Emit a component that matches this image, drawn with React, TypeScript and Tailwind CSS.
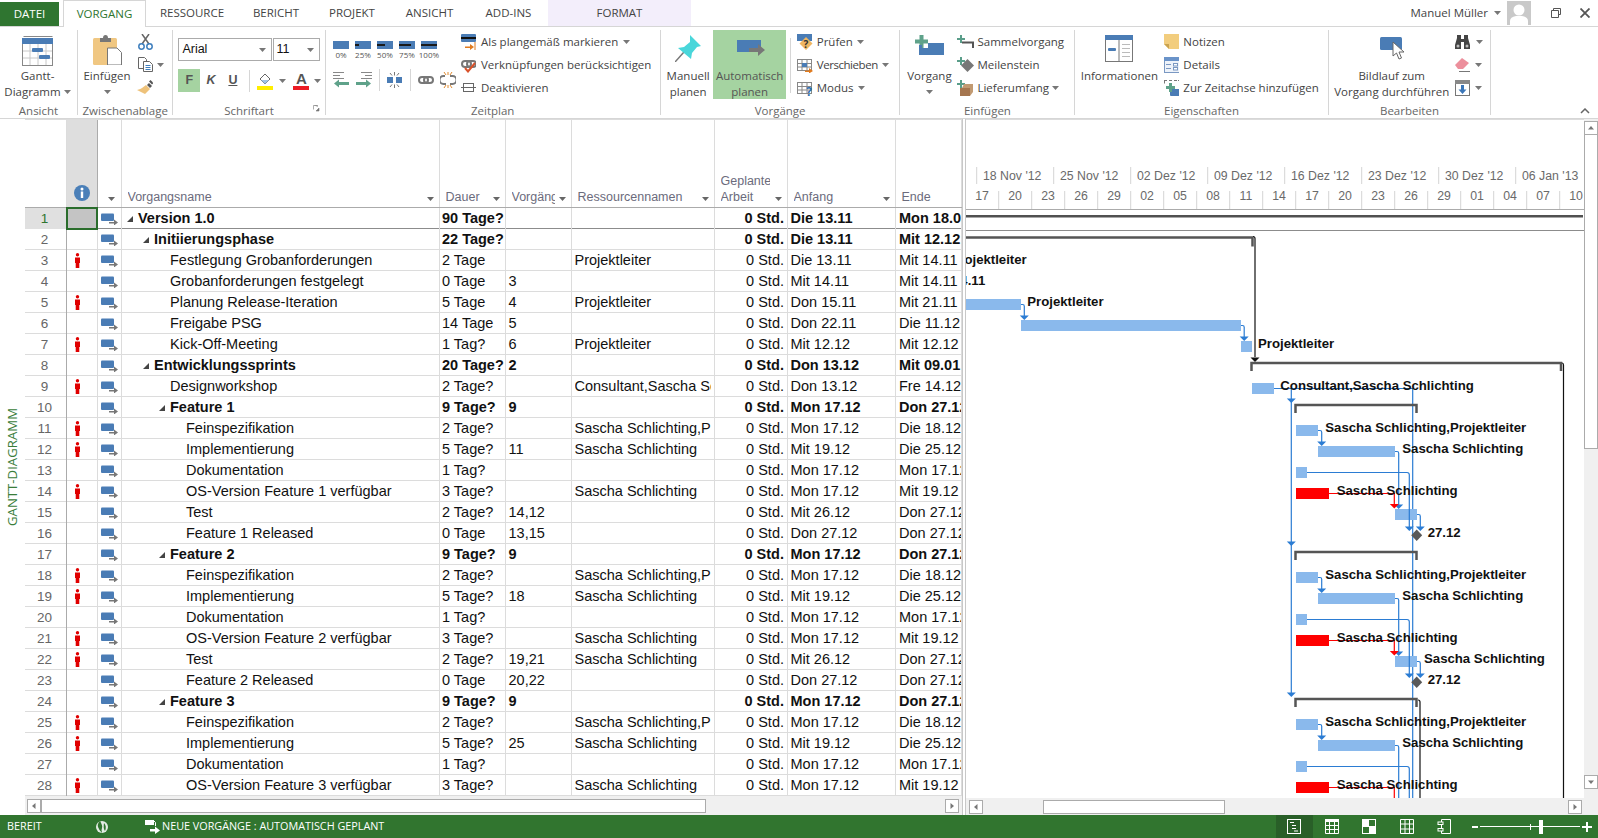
import type { ReactNode } from "react";

const BLUE = "#4a7cb5";

type Row = { n: number; lvl: number; name: string; dur: string; pred: string; res: string; start: string; end: string; bold?: boolean };

const SS = "Sascha Schlichting";
const featureRows = (no: number, first: number, testPred: string, testRes: string): Row[] => [
  { n: first, lvl: 2, name: `Feature ${no}`, dur: "9 Tage?", pred: "9", res: "", start: "Mon 17.12", end: "Don 27.12", bold: true },
  { n: first + 1, lvl: 3, name: "Feinspezifikation", dur: "2 Tage?", pred: "", res: `${SS},Projektleiter`, start: "Mon 17.12", end: "Die 18.12" },
  { n: first + 2, lvl: 3, name: "Implementierung", dur: "5 Tage?", pred: `${first + 1}`, res: SS, start: "Mit 19.12", end: "Die 25.12" },
  { n: first + 3, lvl: 3, name: "Dokumentation", dur: "1 Tag?", pred: "", res: "", start: "Mon 17.12", end: "Mon 17.12" },
  { n: first + 4, lvl: 3, name: `OS-Version Feature ${no} verfügbar`, dur: "3 Tage?", pred: "", res: SS, start: "Mon 17.12", end: "Mit 19.12" },
  { n: first + 5, lvl: 3, name: "Test", dur: "2 Tage?", pred: testPred, res: testRes, start: "Mit 26.12", end: "Don 27.12" },
  { n: first + 6, lvl: 3, name: `Feature ${no} Released`, dur: "0 Tage", pred: `${first + 3},${first + 5}`, res: "", start: "Don 27.12", end: "Don 27.12" },
];

const rows: Row[] = [
  { n: 1, lvl: 0, name: "Version 1.0", dur: "90 Tage?", pred: "", res: "", start: "Die 13.11", end: "Mon 18.03", bold: true },
  { n: 2, lvl: 1, name: "Initiierungsphase", dur: "22 Tage?", pred: "", res: "", start: "Die 13.11", end: "Mit 12.12", bold: true },
  { n: 3, lvl: 2, name: "Festlegung Grobanforderungen", dur: "2 Tage", pred: "", res: "Projektleiter", start: "Die 13.11", end: "Mit 14.11" },
  { n: 4, lvl: 2, name: "Grobanforderungen festgelegt", dur: "0 Tage", pred: "3", res: "", start: "Mit 14.11", end: "Mit 14.11" },
  { n: 5, lvl: 2, name: "Planung Release-Iteration", dur: "5 Tage", pred: "4", res: "Projektleiter", start: "Don 15.11", end: "Mit 21.11" },
  { n: 6, lvl: 2, name: "Freigabe PSG", dur: "14 Tage", pred: "5", res: "", start: "Don 22.11", end: "Die 11.12" },
  { n: 7, lvl: 2, name: "Kick-Off-Meeting", dur: "1 Tag?", pred: "6", res: "Projektleiter", start: "Mit 12.12", end: "Mit 12.12" },
  { n: 8, lvl: 1, name: "Entwicklungssprints", dur: "20 Tage?", pred: "2", res: "", start: "Don 13.12", end: "Mit 09.01", bold: true },
  { n: 9, lvl: 2, name: "Designworkshop", dur: "2 Tage?", pred: "", res: `Consultant,${SS}`, start: "Don 13.12", end: "Fre 14.12" },
  ...featureRows(1, 10, "14,12", ""),
  ...featureRows(2, 17, "19,21", SS),
  ...featureRows(3, 24, "", "").slice(0, 5),
];

const Caret = ({ c = "#777" }: { c?: string }) => (
  <svg width="7" height="4" className="shrink-0">
    <path d="M0 0h7L3.5 4z" fill={c} />
  </svg>
);

const Group = ({ w, label, children }: { w: string; label: string; children: ReactNode }) => (
  <div className={`${w} relative flex h-[85px] shrink-0 flex-col border-r border-[#d6d6d6]`}>
    <div className="flex h-[72px] shrink-0">{children}</div>
    <div className="text-center text-[11.5px] leading-[18px] text-[#666]">{label}</div>
  </div>
);

const SmallRow = ({ icon, text, caret, gap = "gap-[4px]", iw = "w-[16px]", tc = "" }: { icon: ReactNode; text?: string; caret?: boolean; gap?: string; iw?: string; tc?: string }) => (
  <div className={`flex h-[23px] items-center whitespace-nowrap ${gap}`}>
    <div className={`${iw} flex shrink-0 justify-center`}>{icon}</div>
    {text && <span className={tc}>{text}</span>}
    {caret && <Caret />}
  </div>
);

const Large = ({ w, icon, l1, l2, caret, active }: { w: string; icon: ReactNode; l1: string; l2?: string; caret?: boolean; active?: boolean }) => (
  <div className={`${w} flex h-[69px] shrink-0 flex-col items-center ${active ? "bg-[#a5d3a1] text-[#555]" : ""}`}>
    <div className="flex h-[38px] items-start justify-center pt-[5px]">{icon}</div>
    <div className="mt-[1px] whitespace-nowrap leading-[16px]">{l1}</div>
    <div className="flex h-[15px] items-center gap-[3px] whitespace-nowrap leading-[15px]">
      {l2}
      {caret && <Caret />}
    </div>
  </div>
);

const Tab = ({ w, children }: { w: string; children: string }) => (
  <div className={`${w} flex shrink-0 items-center justify-center text-[#444]`}>{children}</div>
);

const PctBar = ({ fill, label }: { fill: number; label: string }) => (
  <div className="flex w-[16px] flex-col items-center">
    <svg width="16" height="8">
      <rect width="16" height="8" fill={BLUE} />
      {fill > 0 && <rect y="3" width={fill * 16} height="2" fill="#1a1a1a" />}
    </svg>
    <span className="mt-[1px] text-[8px] leading-[10px] text-[#555]">{label}</span>
  </div>
);

const Chain = ({ c = "#777" }: { c?: string }) => (
  <g fill="none" stroke={c} strokeWidth="2">
    <rect x="1" y="4" width="9" height="6" rx="3" />
    <rect x="6" y="4" width="9" height="6" rx="3" />
  </g>
);

const Grid = () => (
  <g fill="#fff" stroke="#888" strokeWidth="1">
    <rect x="0.5" y="2.5" width="14" height="11" />
    <path d="M0.5 6.5h14M0.5 10h14M5 2.5v11M10 2.5v11" fill="none" />
  </g>
);

const SmallPlus = () => <path d="M3 0h2v3h3v2H5v3H3V5H0V3h3z" fill="#5a9e8a" />;

const Person = () => (
  <svg width="7" height="15">
    <circle cx="3.5" cy="1.8" r="1.7" fill="#e00000" />
    <path d="M1 4.5h5v5.5H5.3V15H1.7V10H1z" fill="#e00000" />
  </svg>
);

const ModeIcon = () => (
  <svg width="17" height="12">
    <rect y="0.5" width="13" height="7.5" rx="1" fill={BLUE} />
    <path d="M8 9h5V6.5L17 9.5 13 12.5V10.5H8z" fill="#777" />
  </svg>
);

const ScrollBtn = ({ dir }: { dir: "l" | "r" | "u" | "d" }) => (
  <div className="flex h-[14px] w-[14px] shrink-0 items-center justify-center border border-[#ababab] bg-white">
    <svg width="8" height="8">
      {dir === "l" && <path d="M5.5 1v6L2 4z" fill="#777" />}
      {dir === "r" && <path d="M2.5 1v6L6 4z" fill="#777" />}
      {dir === "u" && <path d="M1 5.5h6L4 2z" fill="#777" />}
      {dir === "d" && <path d="M1 2.5h6L4 6z" fill="#777" />}
    </svg>
  </div>
);

const HeadCell = ({ w, lines }: { w: string; lines: string[] }) => (
  <div className="flex items-end justify-between border-r border-[#dcdcdc] pl-[6px] pr-[5px]">
    <div className={`${w} overflow-hidden whitespace-nowrap pb-[2px] leading-[16px]`}>
      {lines.map((l) => (
        <div key={l}>{l}</div>
      ))}
    </div>
    <div className="pb-[6px]">
      <Caret c="#666" />
    </div>
  </div>
);

const COLS = "grid grid-cols-[41px_32px_23.5px_318px_66px_66px_143px_73px_108px_66.5px]";

const TableRow = ({ r }: { r: Row }) => {
  const cell = "overflow-hidden whitespace-nowrap border-r border-[#dcdcdc] leading-[21px]";
  return (
    <div className={`${COLS} h-[21px] border-b ${r.n === 1 ? "border-[#8c8c8c]" : "border-[#dcdcdc]"} ${r.bold ? "font-bold" : ""}`}>
      <div className={`pr-[2px] text-center text-[13.5px] font-normal leading-[21px] ${r.n === 1 ? "bg-[#e0e0e0] text-[#2f7530]" : "text-[#666]"}`}>{r.n}</div>
      <div className={`flex items-center border-x border-l-[#ababab] border-r-[#dcdcdc] ${r.n === 1 ? "justify-center" : "pl-[7px]"}`}>
        {r.n === 1 ? <div className="relative -m-px h-[23px] w-[33px] border-2 border-[#2a6d2c] bg-[#c4c4c4]" /> : r.res && <Person />}
      </div>
      <div className="flex items-center justify-center border-r border-[#dcdcdc]">
        <ModeIcon />
      </div>
      <div className={`${cell} flex items-center`}>
        <div className={r.lvl === 0 ? "w-[16.5px]" : r.lvl === 1 ? "w-[32.5px]" : r.lvl === 2 ? "w-[48.5px]" : "w-[64.5px]"} />
        {r.bold && (
          <svg width="6" height="6" className="-ml-[11px] mr-[5px]">
            <path d="M6 0v6H0z" fill="#444" />
          </svg>
        )}
        {r.name}
      </div>
      <div className={`${cell} pl-[2.5px]`}>
        <div className="w-[61.5px] overflow-hidden">{r.dur}</div>
      </div>
      <div className={`${cell} pl-[3px]`}>{r.pred}</div>
      <div className={`${cell} pl-[3px]`}>
        <div className="w-[136px] overflow-hidden">{r.res}</div>
      </div>
      <div className={`${cell} pr-[2.5px] text-right`}>0 Std.</div>
      <div className={`${cell} pl-[3px]`}>{r.start}</div>
      <div className={`${cell} pl-[3.5px]`}>{r.end}</div>
    </div>
  );
};

const Arrow = ({ x, y, c = "#2b7cd3" }: { x: number; y: number; c?: string }) => (
  <polygon points={`${x - 4.5},${y - 4.5} ${x + 4.5},${y - 4.5} ${x},${y}`} fill={c} />
);

const Bar = ({ x, y, w, c = "#8ab9ec" }: { x: number; y: number; w: number; c?: string }) => <rect x={x} y={y} width={w} height={11} fill={c} />;

const Lbl = ({ x, y, t }: { x: number; y: number; t: string }) => (
  <text x={x} y={y + 3.5} fontSize="13.2" fontWeight="700" fill="#111">
    {t}
  </text>
);

const Summary = ({ x1, x2, y }: { x1: number; x2: number; y: number }) => (
  <path d={`M${x1} ${y + 9}V${y + 1}H${x2}V${y + 9}`} fill="none" stroke="#555" strokeWidth="2.5" />
);

const blueLine = { fill: "none", stroke: "#2b7cd3", strokeWidth: 1.2 };

const Feature = ({ o, test }: { o: number; test?: boolean }) => (
  <g>
    <Summary x1={1295.5} x2={1416.5} y={403 + o} />
    <Bar x={1296} y={424 + o} w={22} />
    <Bar x={1318} y={445 + o} w={77} />
    <Bar x={1296} y={466 + o} w={11} />
    <Bar x={1296} y={487 + o} w={33} c="#ff0000" />
    <Bar x={1395} y={508 + o} w={22} />
    <path {...blueLine} d="M1318 429.5h2q1.7 0 1.7 1.7V441" transform={`translate(0 ${o})`} />
    <Arrow x={1321.7} y={445 + o} />
    <path {...blueLine} d="M1395 450.5h2q1.7 0 1.7 1.7V504" transform={`translate(0 ${o})`} />
    <Arrow x={1398.7} y={508 + o} />
    <path {...blueLine} d="M1307 471.5h100q2.3 0 2.3 2.3V526" transform={`translate(0 ${o})`} />
    <Arrow x={1409.3} y={530 + o} />
    <path d="M1329 492.5h65.3V503" transform={`translate(0 ${o})`} fill="none" stroke="#ff0000" strokeWidth="1.2" />
    <Arrow x={1394.3} y={507.5 + o} c="#ff0000" />
    <path {...blueLine} d="M1417 513.5h1.6q1.7 0 1.7 1.7V526" transform={`translate(0 ${o})`} />
    <Arrow x={1420.3} y={530 + o} />
    <polygon points={`1416.7,${528.5 + o} 1422.2,${534.3 + o} 1416.7,${540 + o} 1411.2,${534.3 + o}`} fill="#595959" />
    <Lbl x={1325.3} y={427.3 + o} t={`${SS},Projektleiter`} />
    <Lbl x={1402.3} y={448.3 + o} t={SS} />
    <Lbl x={1336.7} y={490 + o} t={SS} />
    {test && <Lbl x={1424} y={511 + o} t={SS} />}
    <Lbl x={1427.7} y={532.5 + o} t="27.12" />
  </g>
);

const WEEKS = ["18 Nov '12", "25 Nov '12", "02 Dez '12", "09 Dez '12", "16 Dez '12", "23 Dez '12", "30 Dez '12", "06 Jan '13"];
const DAYS = ["17", "20", "23", "26", "29", "02", "05", "08", "11", "14", "17", "20", "23", "26", "29", "01", "04", "07", "10"];

const GanttChart = () => (
  <svg width="618" height="678" viewBox="966 119 618 678" className="block shrink-0">
    {WEEKS.map((w, i) => (
      <g key={w}>
        <line x1={976.7 + 77 * i} x2={976.7 + 77 * i} y1="166" y2="183" stroke="#d4d4d4" />
        <text x={983 + 77 * i} y="178.5" fontSize="12.3" fill="#6a6a6a">
          {w}
        </text>
      </g>
    ))}
    {DAYS.map((d, i) => (
      <g key={i}>
        {i > 0 && <line x1={965.7 + 33 * i} x2={965.7 + 33 * i} y1="190" y2="208" stroke="#d4d4d4" />}
        <text x={982 + 33 * i} y="199" fontSize="12.3" textAnchor="middle" fill="#6a6a6a">
          {d}
        </text>
      </g>
    ))}
    <line x1="966" x2="1584" y1="208.5" y2="208.5" stroke="#ababab" />
    <line x1="966" x2="1584" y1="229.5" y2="229.5" stroke="#8c8c8c" />
    <rect x="966" y="214" width="617" height="2.5" fill="#505050" />

    <path d="M966 236.5H1252.5V245.5" fill="none" stroke="#555" strokeWidth="2.5" />
    <path d="M1253 235.5q2 0 2 2V356" fill="none" stroke="#111" strokeWidth="1.2" />
    <Arrow x={1255} y={361} c="#111" />
    <Summary x1={1251.5} x2={1561} y={361} />
    <path d="M1562 362q1.5 0 1.5 2V797" fill="none" stroke="#111" strokeWidth="1.2" />

    <Bar x={966} y={298} w={55} />
    <Bar x={1021} y={319} w={220} />
    <Bar x={1241} y={340} w={11} />
    <path {...blueLine} d="M1021 303.5h1.6q1.7 0 1.7 1.7V315" />
    <Arrow x={1024.3} y={319} />
    <path {...blueLine} d="M1241 324.5h1.5q1.7 0 1.7 1.7V336" />
    <Arrow x={1244.2} y={340} />

    <Bar x={1252} y={382} w={22} />
    <path {...blueLine} d="M1274 387.5H1412.7V797" />
    <path {...blueLine} d="M1291.3 387.5V692" />
    <Arrow x={1291.3} y={402} />
    <Arrow x={1291.3} y={545} />
    <Arrow x={1291.3} y={696} />

    <Feature o={0} />
    <Feature o={147} test />
    <Feature o={294} />
    <path d="M1418 699q2 0 2 2V797" fill="none" stroke="#111" strokeWidth="1.2" />

    <Lbl x={950.5} y={259.7} t="Projektleiter" />
    <Lbl x={953} y={280} t="14.11" />
    <Lbl x={1027.3} y={301.3} t="Projektleiter" />
    <Lbl x={1258} y={343.7} t="Projektleiter" />
    <Lbl x={1280.3} y={385.3} t={`Consultant,${SS}`} />
  </svg>
);

export default function App() {
  return (
    <div className="flex h-[838px] w-[1598px] flex-col overflow-hidden bg-white font-['Liberation_Sans',Arial,sans-serif] text-[14.5px] text-[#111]">
      {/* tabs */}
      <div className="flex h-[27px] shrink-0 border-b border-[#d6d6d6] font-['Open_Sans',sans-serif] text-[11.5px]">
        <div className="mt-[2px] flex h-[24px] w-[59px] shrink-0 items-center justify-center bg-[#2f7530] text-white">DATEI</div>
        <div className="ml-[4px] flex h-[27px] w-[83px] shrink-0 items-center justify-center border border-b-0 border-[#d6d6d6] bg-white font-medium text-[#2f7530]">VORGANG</div>
        <Tab w="w-[92px]">RESSOURCE</Tab>
        <Tab w="w-[76px]">BERICHT</Tab>
        <Tab w="w-[76px]">PROJEKT</Tab>
        <Tab w="w-[79px]">ANSICHT</Tab>
        <Tab w="w-[79px]">ADD-INS</Tab>
        <div className="flex h-[26px] w-[143px] shrink-0 items-center justify-center bg-[#f3eefb] text-[#444]">FORMAT</div>
        <div className="ml-auto flex items-center pr-[8px] text-[#444]">
          Manuel Müller
          <span className="mx-[6px]">
            <Caret />
          </span>
          <svg width="24" height="24" className="mr-[20px]">
            <rect width="24" height="24" fill="#c9c9c9" />
            <circle cx="12" cy="9" r="5.5" fill="#fff" />
            <path d="M3 24v-4q0-4 6-5h6q6 1 6 5v4z" fill="#fff" />
          </svg>
          <svg width="10" height="10" className="mr-[19px]">
            <path d="M2.5 2.5V.5h7v6h-2M.5 2.5h7v7h-7z" fill="none" stroke="#555" />
          </svg>
          <svg width="10" height="10">
            <path d="M.5.5l9 9M9.5.5l-9 9" stroke="#555" strokeWidth="1.8" />
          </svg>
        </div>
      </div>

      {/* ribbon */}
      <div className="flex h-[92px] shrink-0 border-b border-[#d6d6d6] pt-[3px] font-['Open_Sans',sans-serif] text-[11.5px] text-[#444]">
        <Group w="w-[78px]" label="Ansicht">
          <Large
            w="w-[75px]"
            l1="Gantt-"
            l2="Diagramm"
            caret
            icon={
              <svg width="32" height="32">
                <path d="M1.5 1.5h29" stroke="#888" />
                <rect x="0.5" y="3.5" width="30" height="27" fill="#fff" stroke="#888" />
                <rect x="0" y="3" width="31" height="6" fill={BLUE} />
                <path d="M8 9v21M16 9v21M24 9v21M1 16h29M1 23h29" stroke="#c8c8c8" />
                <rect x="10" y="13" width="11" height="4" rx="1" fill={BLUE} />
                <rect x="17" y="20" width="11" height="4" rx="1" fill={BLUE} />
              </svg>
            }
          />
        </Group>

        <Group w="w-[95.4px]" label="Zwischenablage">
          <div className="ml-[2px] flex">
            <Large
              w="w-[54px]"
              l1="Einfügen"
              l2=""
              caret
              icon={
                <svg width="29" height="30">
                  <rect y="3" width="24" height="27" rx="1.5" fill="#f0c782" />
                  <path d="M7 3h3q0-3 2.5-3t2.5 3h3v4H7z" fill="#777" />
                  <path d="M14.5 13H24l4.5 4.5V30h-14z" fill="#fff" stroke="#777" />
                </svg>
              }
            />
            <div className="ml-[3px] flex flex-col">
              <SmallRow
                icon={
                  <svg width="15" height="16">
                    <path d="M4 10L11 0M11 10L4 0" stroke="#666" strokeWidth="1.5" />
                    <circle cx="3.5" cy="12.5" r="2.7" fill="none" stroke="#3f7fbe" strokeWidth="1.5" />
                    <circle cx="11.5" cy="12.5" r="2.7" fill="none" stroke="#3f7fbe" strokeWidth="1.5" />
                  </svg>
                }
              />
              <SmallRow
                caret
                icon={
                  <svg width="15" height="15">
                    <path d="M.5.5h6l2 2v9H.5z" fill="#fff" stroke="#666" />
                    <path d="M5.5 4.5h6l3 3v7h-9z" fill="#fff" stroke="#666" />
                    <path d="M7.5 8.5h5M7.5 10.5h5M7.5 12.5h5" stroke="#3f7fbe" />
                  </svg>
                }
              />
              <SmallRow
                icon={
                  <svg width="17" height="15">
                    <path d="M10 5l2-2 3 3-2 2z" fill="#555" />
                    <path d="M12 1.5L13.5 0l3 3L15 4.5z" fill="#555" />
                    <path d="M9 5l4 4-5 5-8-4q4-1 5-2z" fill="#eec27a" />
                  </svg>
                }
              />
            </div>
          </div>
        </Group>

        <Group w="w-[152.2px]" label="Schriftart">
          <div className="flex flex-col pl-[5px] pt-[8px]">
            <div className="flex h-[23px] gap-[1px] font-['Liberation_Sans',sans-serif] text-[12.5px] text-[#111]">
              <div className="flex w-[94px] items-center justify-between border border-[#ababab] pl-[3px] pr-[5px]">
                Arial <Caret />
              </div>
              <div className="flex w-[47px] items-center justify-between border border-[#ababab] pl-[2px] pr-[5px]">
                11 <Caret />
              </div>
            </div>
            <div className="mt-[8px] flex h-[23px] items-center font-['Liberation_Sans',sans-serif] text-[12.5px] font-bold text-[#555]">
              <div className="flex h-[23px] w-[22px] items-center justify-center bg-[#a5d3a1]">F</div>
              <div className="w-[21px] text-center italic">K</div>
              <div className="w-[23px] text-center underline">U</div>
              <div className="ml-[5px] mr-[7px] h-[22px] w-px bg-[#d6d6d6]" />
              <svg width="16" height="18">
                <path d="M3 7l5-5 5 5-5 5z" fill="#fff" stroke="#666" />
                <path d="M4 8h8l-4 4z" fill="#9fc3e8" />
                <rect y="14" width="16" height="4" fill="#ffee00" />
              </svg>
              <span className="ml-[6px] mr-[7px]">
                <Caret />
              </span>
              <div className="flex h-[18px] w-[16px] flex-col items-center border-b-[4px] border-[#ec1c24] text-[15px] leading-[14px]">A</div>
              <span className="ml-[5px]">
                <Caret />
              </span>
            </div>
          </div>
          <svg width="7" height="7" className="absolute bottom-[3px] right-[5px]">
            <path d="M.5.5h4v1M.5.5v4M6 3v3H3z" fill="#777" stroke="#777" strokeWidth="0.6" />
          </svg>
        </Group>

        <Group w="w-[335.2px]" label="Zeitplan">
          <div className="flex w-[135.4px] shrink-0 flex-col pl-[7.4px]">
            <div className="mt-[11px] flex gap-[6px]">
              <PctBar fill={0} label="0%" />
              <PctBar fill={0.25} label="25%" />
              <PctBar fill={0.5} label="50%" />
              <PctBar fill={0.75} label="75%" />
              <PctBar fill={1} label="100%" />
            </div>
            <div className="mt-[11px] flex h-[18px] items-center">
              <svg width="17" height="16">
                <path d="M0 .5h11M0 3.5h7M0 6.5h11" stroke="#888" />
                <path d="M1 11.5l5-4V10h10v3H6v2.5z" fill="#5fa28a" />
              </svg>
              <svg width="17" height="16" className="ml-[5px]">
                <path d="M6 .5h11M10 3.5h7M6 6.5h11" stroke="#888" />
                <path d="M16 11.5l-5-4V10H1v3h10v2.5z" fill="#5fa28a" />
              </svg>
              <div className="ml-[7px] mr-[7px] h-[22px] w-px bg-[#d6d6d6]" />
              <svg width="15" height="16">
                <rect x="0" y="5" width="6" height="6" fill={BLUE} />
                <rect x="9" y="5" width="6" height="6" fill={BLUE} />
                <path d="M7.5 0v3.5M7.5 12.5V16M3 1l2 2.5M12 1l-2 2.5M3 15l2-2.5M12 15l-2-2.5" stroke="#777" />
              </svg>
              <div className="ml-[8px] mr-[7px] h-[22px] w-px bg-[#d6d6d6]" />
              <svg width="16" height="14">
                <Chain />
              </svg>
              <svg width="16" height="16" className="ml-[6px]">
                <path d="M5 4H3.5a3 3 0 0 0 0 8H6M10 4h2.5a3 3 0 0 1 0 8H10" fill="none" stroke="#777" strokeWidth="2" />
                <path d="M4 0l2 3M12 0l-2 3M8 0v3M4 16l2-3M12 16l-2-3M8 16v-3" stroke="#e08a2e" />
              </svg>
            </div>
          </div>
          <div className="flex flex-col">
            <SmallRow
              text="Als plangemäß markieren"
              caret
              gap="gap-[5px]"
              iw="w-[15px]"
              icon={
                <svg width="15" height="16">
                  <rect width="15" height="8" rx="1" fill={BLUE} />
                  <rect y="3" width="15" height="2" fill="#111" />
                  <path d="M4 12.5h5V10l4 3-4 3v-2H4z" fill="#e07b1f" />
                  <path d="M14 8v8" stroke="#e07b1f" />
                </svg>
              }
            />
            <SmallRow
              text="Verknüpfungen berücksichtigen"
              gap="gap-[5px]"
              iw="w-[15px]"
              icon={
                <svg width="16" height="16">
                  <Chain />
                  <path d="M4 11l3 3.5L14 6" fill="none" stroke="#d9532c" strokeWidth="2" />
                </svg>
              }
            />
            <SmallRow
              text="Deaktivieren"
              gap="gap-[5px]"
              iw="w-[15px]"
              icon={
                <svg width="15" height="9">
                  <rect x="2.5" y="0.5" width="10" height="8" fill="#fff" stroke="#666" />
                  <path d="M0 4.5h15" stroke="#666" />
                </svg>
              }
            />
          </div>
        </Group>

        <Group w="w-[239.7px]" label="Vorgänge">
          <div className="flex">
            <div className="ml-[5.4px] mr-[3px]">
              <Large
                w="w-[44px]"
                l1="Manuell"
                l2="planen"
                icon={
                  <svg width="27" height="27">
                    <path d="M0 27l9-10" stroke="#777" strokeWidth="1.5" />
                    <path d="M15 0l11 11-4 1-5 6-1 6L3 13l6-1 6-5z" fill="#49d6da" />
                  </svg>
                }
              />
            </div>
            <Large
              w="w-[73px]"
              active
              l1="Automatisch"
              l2="planen"
              icon={
                <svg width="29" height="22" className="ml-[4px]">
                  <rect x="0" y="5" width="24" height="12" fill={BLUE} />
                  <path d="M12 13h9V9l7 6-7 6v-4h-9z" fill="#777" />
                </svg>
              }
            />
            <div className="ml-[4px] mr-[5.6px] mt-[8px] h-[55px] w-px bg-[#d6d6d6]" />
            <div className="flex flex-col">
              <SmallRow
                text="Prüfen"
                caret
                icon={
                  <svg width="16" height="16">
                    <rect width="15" height="7" fill={BLUE} />
                    <polygon points="9,3 15.5,9.5 9,16 2.5,9.5" fill="#f0b661" />
                    <text x="9" y="13.5" textAnchor="middle" fontSize="10" fontWeight="700" fill="#333">
                      ?
                    </text>
                  </svg>
                }
              />
              <SmallRow
                text="Verschieben"
                caret
                tc="tracking-[-0.45px]"
                icon={
                  <svg width="16" height="16">
                    <Grid />
                    <rect x="5" y="6" width="5" height="4" fill={BLUE} />
                    <path d="M8 13.5h4V11l4 3-4 2.5V15H8z" fill="#e07b1f" />
                  </svg>
                }
              />
              <SmallRow
                text="Modus"
                caret
                icon={
                  <svg width="16" height="16">
                    <Grid />
                    <text x="12" y="15.5" textAnchor="middle" fontSize="12" fontWeight="700" fill="#2a6db0">
                      ?
                    </text>
                  </svg>
                }
              />
            </div>
          </div>
        </Group>

        <Group w="w-[174.9px]" label="Einfügen">
          <div className="flex">
            <div className="ml-[5px]">
              <Large
                w="w-[48px]"
                l1="Vorgang"
                l2=""
                caret
                icon={
                  <svg width="29" height="20">
                    <path d="M4.5 0h4v4.5H13v4H8.5V13h-4V8.5H0v-4h4.500z" fill="#5fa28a" />
                    <path d="M4 10h3v3h6V8h16v12H4z" fill={BLUE} />
                  </svg>
                }
              />
            </div>
            <div className="ml-[4px] flex flex-col">
              <SmallRow
                text="Sammelvorgang"
                gap="gap-[3px]"
                iw="w-[17px]"
                icon={
                  <svg width="17" height="14">
                    <SmallPlus />
                    <path d="M5 7.5h11V13" fill="none" stroke="#555" strokeWidth="2" />
                  </svg>
                }
              />
              <SmallRow
                text="Meilenstein"
                gap="gap-[3px]"
                iw="w-[17px]"
                icon={
                  <svg width="17" height="15">
                    <SmallPlus />
                    <polygon points="10.5,2 17,8.5 10.5,15 4,8.5" fill="#777" />
                  </svg>
                }
              />
              <SmallRow
                text="Lieferumfang"
                caret
                gap="gap-[3px]"
                iw="w-[17px]"
                icon={
                  <svg width="17" height="16">
                    <SmallPlus />
                    <path d="M3 8h10v8H3z" fill="#a5764f" />
                    <path d="M13 8l3-4H7L5 8zM13 8l3-4v8l-3 4z" fill="#c19a72" />
                  </svg>
                }
              />
            </div>
          </div>
        </Group>

        <Group w="w-[253.3px]" label="Eigenschaften">
          <div className="flex">
            <div className="ml-[5px]">
              <Large
                w="w-[78px]"
                l1="Informationen"
                icon={
                  <svg width="28" height="27">
                    <rect x="0.5" y="0.5" width="27" height="26" fill="#fff" stroke="#777" />
                    <rect width="28" height="5" fill={BLUE} />
                    <rect x="3" y="13" width="8" height="3" rx="1" fill={BLUE} />
                    <path d="M14 5v21" stroke="#777" />
                    <path d="M17 9.5h8M17 13.5h8M17 17.5h8M17 21.5h8" stroke="#bbb" />
                  </svg>
                }
              />
            </div>
            <div className="ml-[6px] flex flex-col">
              <SmallRow
                text="Notizen"
                gap="gap-[4px]"
                iw="w-[15px]"
                icon={
                  <svg width="15" height="15">
                    <path d="M0 0h15v15H5L0 10z" fill="#f2cd7e" />
                    <path d="M0 10h5v5z" fill="#caa34f" />
                  </svg>
                }
              />
              <SmallRow
                text="Details"
                gap="gap-[4px]"
                iw="w-[15px]"
                icon={
                  <svg width="16" height="16">
                    <rect x="0.5" y="0.5" width="15" height="15" fill="#eef3fa" stroke="#7a98c2" />
                    <rect width="16" height="4" fill="#6a93c9" />
                    <path d="M2 7.5h5M2 11.5h5" stroke="#7a98c2" />
                    <rect x="9.5" y="6.5" width="4" height="2.5" fill="#fff" stroke="#7a98c2" />
                    <rect x="9.5" y="10.5" width="4" height="2.5" fill="#fff" stroke="#7a98c2" />
                  </svg>
                }
              />
              <SmallRow
                text="Zur Zeitachse hinzufügen"
                gap="gap-[4px]"
                iw="w-[15px]"
                icon={
                  <svg width="16" height="16">
                    <path d="M0 .5h3M5 .5h3M10 .5h3M14 .5h2M.5 .5v3M15.5 .5v3" stroke="#777" />
                    <rect x="6" y="9" width="10" height="7" rx="1" fill={BLUE} />
                    <path d="M5 3h3v3h3v3H8v3H5V9H2V6h3z" fill="#5fa28a" />
                  </svg>
                }
              />
            </div>
          </div>
        </Group>

        <Group w="w-[162.7px]" label="Bearbeiten">
          <div className="flex">
            <div className="ml-[6.6px]">
              <Large
                w="w-[113px]"
                l1="Bildlauf zum"
                l2="Vorgang durchführen"
                icon={
                  <svg width="24" height="25">
                    <rect y="2" width="22" height="13" rx="1.5" fill={BLUE} />
                    <path d="M13 7v14l3.5-3 2.5 6 2.5-1-2.5-6H24z" fill="#fff" stroke="#666" />
                  </svg>
                }
              />
            </div>
            <div className="ml-[7px] flex flex-col">
              <SmallRow
                caret
                gap="gap-[6px]"
                iw="w-[15px]"
                icon={
                  <svg width="15" height="14">
                    <path d="M2 0h4v4h3V0h4v3l2 7v4H9V7H6v7H0v-4l2-7z" fill="#444" />
                    <circle cx="3" cy="11" r="1.5" fill="#bbb" />
                    <circle cx="12" cy="11" r="1.5" fill="#bbb" />
                  </svg>
                }
              />
              <SmallRow
                caret
                gap="gap-[5px]"
                iw="w-[15px]"
                icon={
                  <svg width="15" height="14">
                    <path d="M0 7l7-7 7 5-6 6H3z" fill="#ec8f9c" />
                    <path d="M4 13.5h11" stroke="#777" />
                  </svg>
                }
              />
              <SmallRow
                caret
                gap="gap-[5px]"
                iw="w-[15px]"
                icon={
                  <svg width="15" height="16">
                    <rect x="0.5" y="0.5" width="14" height="15" fill="#fff" stroke="#777" />
                    <rect width="15" height="4" fill="#888" />
                    <path d="M6 5h3v4.5h2.5L7.500 14l-4-4.5H6z" fill="#3a76b8" />
                  </svg>
                }
              />
            </div>
          </div>
        </Group>

        <div className="flex flex-1 items-end justify-end pb-[3px] pr-[8px]">
          <svg width="10" height="6" className="mb-[1px]">
            <path d="M1 5l4-4 4 4" fill="none" stroke="#666" strokeWidth="1.5" />
          </svg>
        </div>
      </div>

      {/* main */}
      <div className="flex min-h-0 flex-1">
        <div className="flex w-[25px] shrink-0 items-center justify-center">
          <span className="rotate-180 whitespace-nowrap font-['Open_Sans',sans-serif] text-[13.2px] text-[#3a7d3a] [writing-mode:vertical-rl]">GANTT-DIAGRAMM</span>
        </div>

        <div className="flex w-[937px] shrink-0 flex-col">
          <div className={`${COLS} h-[89px] border-b border-t border-b-[#ababab] border-t-[#dcdcdc] text-[12.5px] text-[#6b6b7c]`}>
            <div />
            <div className="flex items-end justify-center border-l border-r border-l-[#dcdcdc] border-r-[#ababab] bg-[#dedede] pb-[6px]">
              <svg width="16" height="16">
                <circle cx="8" cy="8" r="8" fill="#4a7fb8" />
                <rect x="6.8" y="6.5" width="2.4" height="6.5" fill="#fff" />
                <circle cx="8" cy="4" r="1.5" fill="#fff" />
              </svg>
            </div>
            <div className="flex items-end justify-end border-r border-[#dcdcdc] pb-[6px] pr-[6px]">
              <Caret c="#666" />
            </div>
            <HeadCell w="w-[150px]" lines={["Vorgangsname"]} />
            <HeadCell w="w-[40px]" lines={["Dauer"]} />
            <HeadCell w="w-[43px]" lines={["Vorgänger"]} />
            <HeadCell w="w-[120px]" lines={["Ressourcennamen"]} />
            <HeadCell w="w-[49px]" lines={["Geplante", "Arbeit"]} />
            <HeadCell w="w-[60px]" lines={["Anfang"]} />
            <div className="flex items-end border-r border-[#dcdcdc] pb-[2px] pl-[6px] leading-[16px]">Ende</div>
          </div>
          {rows.map((r) => (
            <TableRow key={r.n} r={r} />
          ))}
          <div className="flex h-[19px] items-center bg-[#f0f0f0] pl-[2px]">
            <ScrollBtn dir="l" />
            <div className="h-[14px] w-[665px] border border-[#ababab] bg-white" />
            <div className="flex-1" />
            <ScrollBtn dir="r" />
            <div className="w-[3px]" />
          </div>
        </div>

        <div className="flex w-[4px] shrink-0 border-x border-[#c8c8c8]" />

        <div className="flex w-[618px] shrink-0 flex-col">
          <div className="border-t border-[#dcdcdc]">
            <GanttChart />
          </div>
          <div className="flex h-[18px] items-center bg-[#f0f0f0] pl-[2.5px] pr-[2px]">
            <ScrollBtn dir="l" />
            <div className="ml-[60px] h-[14px] w-[182px] border border-[#ababab] bg-white" />
            <div className="flex-1" />
            <ScrollBtn dir="r" />
          </div>
        </div>

        <div className="flex w-[14px] shrink-0 flex-col bg-[#f0f0f0] pt-[2px]">
          <ScrollBtn dir="u" />
          <div className="h-[314px] border border-t-0 border-[#ababab] bg-white" />
          <div className="flex-1" />
          <ScrollBtn dir="d" />
          <div className="h-[26px]" />
        </div>
      </div>

      {/* status bar */}
      <div className="flex h-[23px] shrink-0 items-center bg-[#31752f] font-['Open_Sans',sans-serif] text-[10.8px] text-white">
        <span className="ml-[7px] w-[89px]">BEREIT</span>
        <svg width="12" height="12">
          <circle cx="6" cy="6" r="6" fill="#e4ece4" />
          <path d="M4 0q-3 3-2 6t4 6q-1-3 0-5T4 0zM8 2q3 3 1 8-2-3-1-8z" fill="#31752f" />
        </svg>
        <svg width="15" height="14" className="ml-[37px] mr-[2px]">
          <path d="M.5.5h8l2 2V6" fill="none" stroke="#fff" />
          <rect y="0" width="9" height="5" fill="#fff" />
          <path d="M5 9h5V6.5l5 4-5 3.5v-2.5H5z" fill="#fff" />
        </svg>
        <span className="whitespace-nowrap">NEUE VORGÄNGE : AUTOMATISCH GEPLANT</span>
        <div className="ml-auto flex h-full items-center">
          <div className="flex h-[23px] w-[37.5px] items-center justify-center bg-[#295f28]">
            <svg width="14" height="15">
              <rect x="0.5" y="0.5" width="13" height="14" fill="none" stroke="#fff" />
              <path d="M3 3.5h4M5 6.5h4M5 9.5h4M7 12h4" stroke="#fff" />
            </svg>
          </div>
          <div className="flex w-[37.5px] justify-center">
            <svg width="14" height="15">
              <rect width="14" height="3" fill="#fff" />
              <path d="M.5 3v11.5h13V3M4.5 3v11M9.5 3v11M0 6.5h14M0 10.5h14" fill="none" stroke="#fff" />
            </svg>
          </div>
          <div className="flex w-[37.5px] justify-center">
            <svg width="14" height="15">
              <rect x="0.5" y="0.5" width="13" height="14" fill="none" stroke="#fff" />
              <rect x="1" y="1" width="6" height="6" fill="#fff" />
              <rect x="7" y="8" width="6" height="6" fill="#fff" />
              <path d="M0 7.5h14" stroke="#fff" />
            </svg>
          </div>
          <div className="flex w-[37.5px] justify-center">
            <svg width="14" height="15">
              <path d="M.5.5h13v14H.5zM5 .5v14M9.5.5v14M.5 5h13M.5 10h13" fill="none" stroke="#fff" />
            </svg>
          </div>
          <div className="flex w-[37.5px] justify-center">
            <svg width="14" height="15">
              <path d="M4.5.5h9v14h-9z" fill="none" stroke="#fff" />
              <rect x="1" y="3" width="5" height="2.5" fill="#31752f" stroke="#fff" />
              <rect x="1" y="9.5" width="5" height="2.5" fill="#31752f" stroke="#fff" />
            </svg>
          </div>
          <div className="ml-[9px] flex items-center text-[15px] font-bold leading-none">
            <div className="h-[2px] w-[6px] bg-white" />
            <div className="relative ml-[2px] mr-[2px] flex h-[14px] w-[100px] items-center">
              <div className="h-px w-full bg-white" />
              <div className="absolute left-[50px] h-[6px] w-px bg-white" />
              <div className="absolute left-[59px] h-[14px] w-[4px] bg-white" />
            </div>
            <svg width="10" height="10" className="mr-[6px]">
              <path d="M4 0h2v4h4v2H6v4H4V6H0V4h4z" fill="#fff" />
            </svg>
          </div>
        </div>
      </div>
    </div>
  );
}
